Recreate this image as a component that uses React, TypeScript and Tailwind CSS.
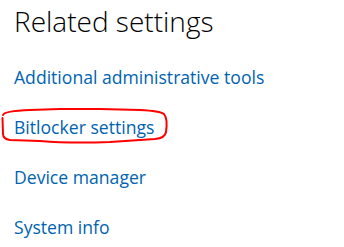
import React from "react";

const font = { fontFamily: '"Segoe UI", "Open Sans", "Noto Sans", sans-serif' };

export default function App() {
  const links = ["Additional administrative tools", "Bitlocker settings", "Device manager", "System info"];
  return (
    <div className="relative w-[344px] h-[247px] bg-white overflow-hidden" style={font}>
      <div className="pl-[14px] pt-[2px]">
        <h1 className="text-[28px] leading-[38px] font-light text-black">Related settings</h1>
        <ul className="mt-[26px] flex flex-col gap-[28px]">
          {links.map((l) => (
            <li key={l} className="text-[17.6px] leading-[22px] text-[#0063b1] whitespace-nowrap">{l}</li>
          ))}
        </ul>
      </div>
      <svg className="absolute left-0 top-0" width="344" height="247" viewBox="0 0 344 247" fill="none">
        <path
          d="M 3 115 Q 4 111 30 110 L 60 109 L 100 109 L 140 110 Q 160 111 164 114 Q 168 119 166 132 Q 165 138 155 139 L 110 142 Q 70 143.5 40 141 L 10 140 Q 3 139 3 134 L 2.5 118"
          stroke="#ff0000"
          strokeWidth="2"
          strokeLinecap="round"
          strokeLinejoin="round"
        />
      </svg>
    </div>
  );
}
